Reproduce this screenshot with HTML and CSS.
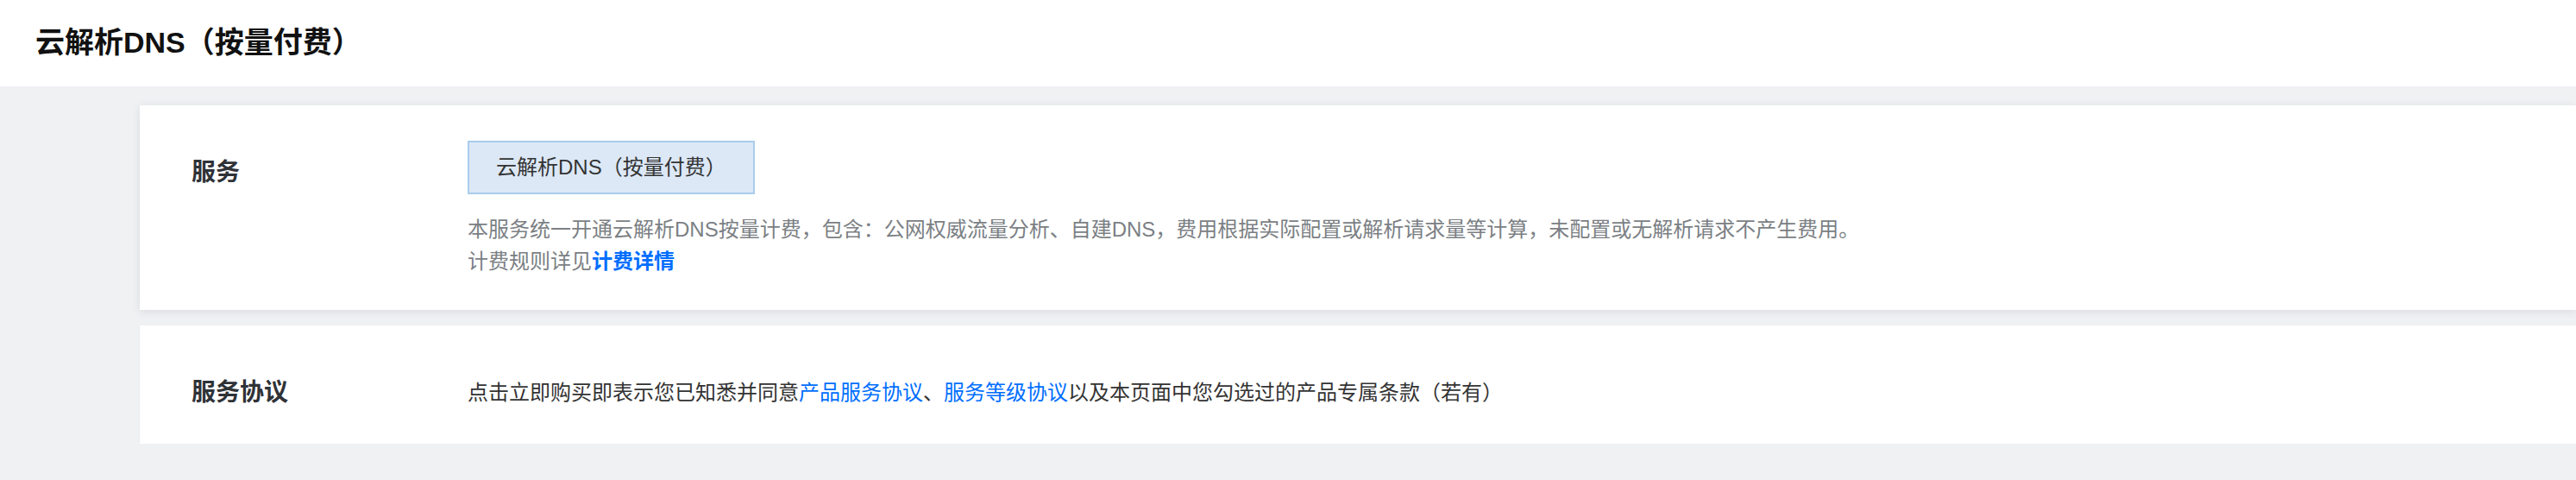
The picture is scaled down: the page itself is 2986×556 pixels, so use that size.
FILE: index.html
```html
<!DOCTYPE html>
<html lang="zh-CN">
<head>
  <meta charset="UTF-8" />
  <title>云解析DNS（按量付费）</title>
  <link rel="stylesheet" href="styles.css">
</head>
<body>
  <div class="page-header">
    <h1 class="page-title">云解析DNS（按量付费）</h1>
  </div>

  <div class="main">
    <div class="card card-service">
      <div class="row">
        <div class="label">服务</div>
        <div class="content">
          <div class="option-list">
            <div class="option selected">云解析DNS（按量付费）</div>
          </div>
          <div class="desc">
            本服务统一开通云解析DNS按量计费，包含：公网权威流量分析、自建DNS，费用根据实际配置或解析请求量等计算，未配置或无解析请求不产生费用。<br>
            计费规则详见<a class="link strong" href="#">计费详情</a>
          </div>
        </div>
      </div>
    </div>

    <div class="card card-agreement">
      <div class="row">
        <div class="label">服务协议</div>
        <div class="content agreement">
          点击立即购买即表示您已知悉并同意<a class="link" href="#">产品服务协议</a>、<a class="link" href="#">服务等级协议</a>以及本页面中您勾选过的产品专属条款（若有）
        </div>
      </div>
    </div>
  </div>
</body>
</html>
```

FILE: styles.css
```css
* {
  box-sizing: border-box;
}
body {
  margin: 0;
  font-family: "Liberation Sans", "Noto Sans CJK SC", sans-serif;
  background-color: #f0f1f3;
  color: #333;
  overflow: hidden;
}

.page-header {
  height: 100px;
  background: #fff;
  display: flex;
  align-items: center;
  padding-left: 41px;
}

.page-title {
  margin: 0;
  font-size: 34px;
  font-weight: bold;
  color: #111;
  line-height: 40px;
  padding-bottom: 2px;
}

.main {
  padding: 22px 0 0 162px;
  display: flex;
  flex-direction: column;
  gap: 18px;
}

.card {
  background: #fff;
}

.card-service {
  padding: 41px 60px 38px;
  box-shadow: 0 2px 10px rgba(30, 40, 60, 0.1);
}

.card-agreement {
  padding: 60px 60px 41px;
  box-shadow: 0 1px 3px rgba(30, 40, 60, 0.05);
}

.row {
  display: flex;
  align-items: flex-start;
}

.label {
  width: 320px;
  flex-shrink: 0;
  font-size: 28px;
  font-weight: bold;
  color: #2f3237;
  line-height: 36px;
}

.card-service .label {
  margin-top: 19px;
}

.content {
  font-size: 24px;
  line-height: 36px;
}

.option-list {
  display: flex;
}

.option {
  height: 62px;
  line-height: 58px;
  padding: 0 31px;
  border: 2px solid #ddd;
  font-size: 24px;
  color: #333;
}

.option.selected {
  background: #dce8f6;
  border-color: #a9cdec;
}

.desc {
  margin-top: 22px;
  color: #7b7f84;
  line-height: 37px;
}

.agreement {
  color: #333;
}

.link {
  color: #006eff;
  text-decoration: none;
}

.strong {
  font-weight: bold;
}
```
